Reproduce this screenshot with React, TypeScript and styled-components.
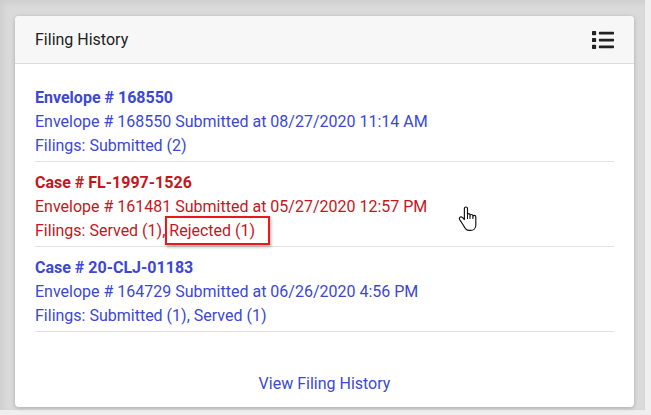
import React from 'react'
import styled, { createGlobalStyle } from 'styled-components'
import { FaList } from 'react-icons/fa'

const GlobalStyle = createGlobalStyle`
  html, body {
    margin: 0;
    padding: 0;
    background: #efefef;
  }
  body {
    font-family: Roboto, 'Liberation Sans', sans-serif;
  }
`

const Screen = styled.div`
  width: 651px;
  height: 415px;
  display: flex;
  background: #efefef;
`

const Pane = styled.div`
  width: 645px;
  height: 410px;
  box-sizing: border-box;
  padding: 16px 11px 0 15px;
  background: #dadada;
  box-shadow: inset 3px 3px 6px rgba(0, 0, 0, 0.06);
`

const Card = styled.div`
  position: relative;
  height: 391px;
  background: #fff;
  border-radius: 4px;
  box-shadow: 0 1px 4px rgba(0, 0, 0, 0.22);
  display: flex;
  flex-direction: column;
  overflow: hidden;
`

const Header = styled.div`
  height: 48px;
  flex-shrink: 0;
  box-sizing: border-box;
  display: flex;
  align-items: center;
  justify-content: space-between;
  padding: 0 20px;
  background: #f7f7f7;
  border-bottom: 1px solid #dcdcdc;
`

const Title = styled.h3`
  margin: 0;
  font-size: 16px;
  font-weight: 400;
  color: #222;
`

const ListIcon = styled(FaList)`
  width: 22px;
  height: 22px;
  color: #222;
`

const Body = styled.div`
  padding: 13px 20px 0;
  flex: 1;
  display: flex;
  flex-direction: column;
`

const Item = styled.div<{ $tone: 'blue' | 'red' }>`
  padding: 9px 0 3px;
  border-bottom: 1px solid #e2e2e2;
  font-size: 16px;
  line-height: 24px;
  color: ${(p) => (p.$tone === 'red' ? '#c4161c' : '#3b48d4')};
`

const ItemTitle = styled.div`
  font-weight: 700;
`

const Line = styled.div``

const Flagged = styled.span`
  border: 2px solid #e8181c;
  padding: 3px 13px 3px 2px;
  box-shadow: 1px 2px 3px rgba(0, 0, 0, 0.3);
`

const Footer = styled.div`
  margin-top: auto;
  padding-bottom: 11px;
  text-align: center;
`

const FooterLink = styled.a`
  font-size: 16px;
  line-height: 24px;
  color: #3b48d4;
  text-decoration: none;
  cursor: pointer;
`

const Cursor = styled.svg`
  position: absolute;
  left: 442px;
  top: 190px;
  width: 21px;
  height: 26px;
`

const HandCursor = () => (
  <Cursor viewBox="0 0 20 25">
    <path
      d="M8.5 1C7.7 1 7 1.7 7 2.5V13L5 11C4.3 10.3 3.2 10.3 2.6 11C2 11.6 2 12.5 2.5 13.1L6 18.5C7 20.5 8.5 23.5 11.5 23.5H13C16 23.5 18 21.2 18 18.2V10.5C18 9.7 17.4 9 16.6 9C15.8 9 15.2 9.6 15.2 10.4V9.6C15.2 8.8 14.6 8.2 13.8 8.2C13 8.2 12.4 8.8 12.4 9.6V8.8C12.4 8 11.8 7.4 11 7.4C10.4 7.4 10 7.8 10 8.4V2.5C10 1.7 9.3 1 8.5 1Z"
      fill="#fff"
      stroke="#111"
      strokeWidth="1.1"
      strokeLinejoin="round"
    />
    <path d="M10 8.4V12.5M12.4 9.6V12.5M15.2 10.4V12.5" stroke="#111" strokeWidth="1" />
  </Cursor>
)

export default function App() {
  return (
    <>
      <GlobalStyle />
      <Screen>
        <Pane>
          <Card>
            <Header>
              <Title>Filing History</Title>
              <ListIcon />
            </Header>
            <Body>
              <Item $tone="blue">
                <ItemTitle>Envelope # 168550</ItemTitle>
                <Line>Envelope # 168550 Submitted at 08/27/2020 11:14 AM</Line>
                <Line>Filings: Submitted (2)</Line>
              </Item>
              <Item $tone="red">
                <ItemTitle>Case # FL-1997-1526</ItemTitle>
                <Line>Envelope # 161481 Submitted at 05/27/2020 12:57 PM</Line>
                <Line>
                  Filings: Served (1),<Flagged>Rejected (1)</Flagged>
                </Line>
              </Item>
              <Item $tone="blue">
                <ItemTitle>Case # 20-CLJ-01183</ItemTitle>
                <Line>Envelope # 164729 Submitted at 06/26/2020 4:56 PM</Line>
                <Line>Filings: Submitted (1), Served (1)</Line>
              </Item>
              <Footer>
                <FooterLink>View Filing History</FooterLink>
              </Footer>
            </Body>
            <HandCursor />
          </Card>
        </Pane>
      </Screen>
    </>
  )
}
